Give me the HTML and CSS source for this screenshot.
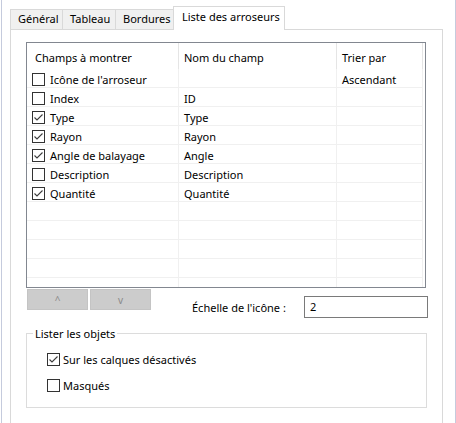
FILE: index.html
```html
<!DOCTYPE html>
<html>
<head>
<meta charset="utf-8">
<link rel="stylesheet" href="styles.css">
</head>
<body>
<div class="window">
  <div class="tabs">
    <div class="tab t1">Général</div>
    <div class="tab t2">Tableau</div>
    <div class="tab t3">Bordures</div>
    <div class="tab active">Liste des arroseurs</div>
  </div>
  <div class="panel">
    <div class="list">
      <div class="lhead">
        <div class="hcell c1">Champs à montrer</div>
        <div class="hcell c2">Nom du champ</div>
        <div class="hcell c3">Trier par</div>
      </div>
      <div class="row"><div class="cell c1"><span class="cb"></span>Icône de l'arroseur</div><div class="cell c2"></div><div class="cell c3">Ascendant</div></div>
      <div class="row"><div class="cell c1"><span class="cb"></span>Index</div><div class="cell c2">ID</div><div class="cell c3"></div></div>
      <div class="row"><div class="cell c1"><span class="cb"><svg viewBox="0 0 11 11" class="chk"><polyline points="1.5,5.5 4,8 9.5,2.5"/></svg></span>Type</div><div class="cell c2">Type</div><div class="cell c3"></div></div>
      <div class="row"><div class="cell c1"><span class="cb"><svg viewBox="0 0 11 11" class="chk"><polyline points="1.5,5.5 4,8 9.5,2.5"/></svg></span>Rayon</div><div class="cell c2">Rayon</div><div class="cell c3"></div></div>
      <div class="row"><div class="cell c1"><span class="cb"><svg viewBox="0 0 11 11" class="chk"><polyline points="1.5,5.5 4,8 9.5,2.5"/></svg></span>Angle de balayage</div><div class="cell c2">Angle</div><div class="cell c3"></div></div>
      <div class="row"><div class="cell c1"><span class="cb"></span>Description</div><div class="cell c2">Description</div><div class="cell c3"></div></div>
      <div class="row"><div class="cell c1"><span class="cb"><svg viewBox="0 0 11 11" class="chk"><polyline points="1.5,5.5 4,8 9.5,2.5"/></svg></span>Quantité</div><div class="cell c2">Quantité</div><div class="cell c3"></div></div>
      <div class="row"><div class="cell c1"></div><div class="cell c2"></div><div class="cell c3"></div></div>
      <div class="row"><div class="cell c1"></div><div class="cell c2"></div><div class="cell c3"></div></div>
      <div class="row"><div class="cell c1"></div><div class="cell c2"></div><div class="cell c3"></div></div>
      <div class="row"><div class="cell c1"></div><div class="cell c2"></div><div class="cell c3"></div></div>
      <div class="row"><div class="cell c1"></div><div class="cell c2"></div><div class="cell c3"></div></div>
    </div>
    <div class="controls">
      <div class="btn up">^</div>
      <div class="btn down">v</div>
      <div class="field">
        <span class="flabel">Échelle de l'icône :</span>
        <div class="input">2</div>
      </div>
    </div>
    <fieldset class="group">
      <legend>Lister les objets</legend>
      <div class="opts">
        <div class="opt"><span class="cb"><svg viewBox="0 0 11 11" class="chk"><polyline points="1.5,5.5 4,8 9.5,2.5"/></svg></span>Sur les calques désactivés</div>
        <div class="opt"><span class="cb"></span>Masqués</div>
      </div>
    </fieldset>
  </div>
</div>
</body>
</html>
```
FILE: styles.css
```css
html, body {
  margin: 0;
  height: 423px;
  overflow: hidden;
  background: #ffffff;
}
body {
  font-family: "Noto Sans", "Open Sans", sans-serif;
  font-size: 11px;
  color: #000000;
}
.window {
  margin-left: 1px;
  width: 455px;
  height: 423px;
  box-sizing: border-box;
  border-left: 1px solid #c5cbdd;
  border-right: 1px solid #c5cbdd;
  padding: 0 12px 0 8px;
  overflow: hidden;
}
.tabs {
  display: flex;
  align-items: flex-end;
  height: 23px;
  padding-top: 6px;
}
.tab {
  box-sizing: border-box;
  height: 20px;
  border: 1px solid #d9d9d9;
  border-bottom: none;
  background: #f0f0f0;
  margin-left: -1px;
  padding-left: 7px;
  line-height: 18px;
  white-space: nowrap;
}
.t1 { width: 53px; margin-left: 0; }
.t2 { width: 54px; }
.t3 { width: 59px; }
.tab.active {
  width: 112px;
  height: 24px;
  margin-bottom: -1px;
  background: #ffffff;
  padding-left: 8px;
  line-height: 20px;
  position: relative;
  z-index: 1;
}
.panel {
  width: 433px;
  height: 480px;
  box-sizing: border-box;
  border: 1px solid #d9d9d9;
  background: #ffffff;
  padding: 12px 0 0 15px;
}
.list {
  width: 400px;
  height: 246px;
  box-sizing: border-box;
  border: 1px solid #828790;
  overflow: hidden;
}
.lhead {
  display: flex;
  height: 26px;
}
.hcell {
  box-sizing: border-box;
  border-right: 1px solid #e5e5e5;
  display: flex;
  align-items: center;
  padding-left: 5px;
  padding-top: 2px;
  white-space: nowrap;
}
.c1 { width: 152px; }
.c2 { width: 158px; }
.c3 { width: 86px; }
.hcell.c1 { padding-left: 8px; }
.row {
  display: flex;
  width: 396px;
  height: 19px;
  box-sizing: border-box;
  border-bottom: 1px solid #f0f0f0;
}
.cell {
  box-sizing: border-box;
  border-right: 1px solid #f0f0f0;
  display: flex;
  align-items: center;
  padding-left: 5px;
  padding-top: 3px;
  white-space: nowrap;
}
.cb {
  flex: none;
  width: 13px;
  height: 13px;
  box-sizing: border-box;
  border: 1px solid #333333;
  background: #ffffff;
  margin-right: 5px;
  display: block;
}
.chk {
  display: block;
  width: 11px;
  height: 11px;
  fill: none;
  stroke: #3c3c3c;
  stroke-width: 1.1;
}
.controls {
  display: flex;
  align-items: flex-start;
  margin-top: 1px;
  padding-left: 1px;
  gap: 2px;
}
.btn {
  width: 61px;
  height: 21px;
  box-sizing: border-box;
  background: #cccccc;
  border: 1px solid #c4c4c4;
  color: #8a8a8a;
  display: flex;
  align-items: center;
  justify-content: center;
  font-size: 10px;
}
.field {
  display: flex;
  align-items: center;
  margin-top: 7px;
  margin-left: 39px;
}
.flabel {
  width: 112px;
  white-space: nowrap;
}
.input {
  width: 124px;
  height: 22px;
  box-sizing: border-box;
  border: 1px solid #7a7a7a;
  padding-left: 5px;
  line-height: 19px;
}
.group {
  width: 401px;
  box-sizing: border-box;
  margin: 8px 0 0 0;
  padding: 0 0 15px 0;
  border: 1px solid #dcdcdc;
  min-width: 0;
}
.group legend {
  margin-left: 6px;
  padding: 0 2px;
  line-height: 15px;
}
.opts {
  padding: 12px 0 0 20px;
  display: flex;
  flex-direction: column;
  gap: 13px;
}
.opt {
  display: flex;
  align-items: center;
  height: 13px;
  white-space: nowrap;
}
.opt .cb { margin-right: 3px; }
```
